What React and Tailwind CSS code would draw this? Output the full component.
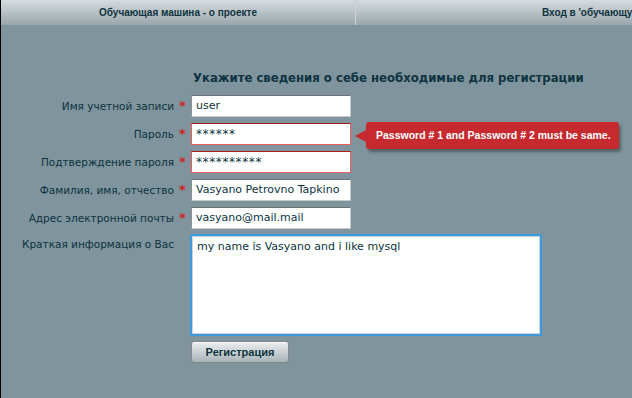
import React from "react";

const font = { fontFamily: '"DejaVu Sans", Verdana, sans-serif' };
const sansB = { fontFamily: '"Liberation Sans", Arial, sans-serif' };

function Label({ children, req }) {
  return (
    <>
      <div className="text-right text-[10.5px] leading-[22px] text-[#0d3340] whitespace-nowrap">{children}</div>
      <div className="text-center text-[13px] leading-[22px] text-[#d02020] font-bold">{req ? "*" : ""}</div>
    </>
  );
}

function Input({ value, error, children, big }) {
  return (
    <div className="relative">
      <div
        className={
          "w-[160px] h-[22px] bg-white border px-[4px] leading-[20px] text-[#0d3340] whitespace-nowrap overflow-hidden " +
          (big ? "text-[12px] tracking-[0.6px] " : "text-[11px] ") +
          (error
            ? "border-[#f05a5a] border-t-[#a81c1c]"
            : "border-[#c8c8c8] border-t-[#6a7276] border-l-[#8a9296]")
        }
      >
        {value}
      </div>
      {children}
    </div>
  );
}

export default function App() {
  return (
    <div style={font} className="w-[632px] h-[398px] bg-[#7f949d] border-l border-black overflow-hidden">
      <div style={sansB} className="flex h-[25px] bg-gradient-to-b from-[#d6dcdf] to-[#9aa6ac] text-[10px] font-bold text-[#0d3340] leading-[25px]">
        <div className="w-[354px] text-center">Обучающая машина - о проекте</div>
        <div className="w-px bg-[#c9d1d5]"></div>
        <div className="flex-1 pl-[186px] whitespace-nowrap overflow-hidden">Вход в 'обучающую машину'</div>
      </div>

      <div className="ml-[192px] mt-[45px] h-[16px] text-[11.7px] leading-[16px] font-bold text-[#0e3341] whitespace-nowrap">
        Укажите сведения о себе необходимые для регистрации
      </div>

      <div className="mt-[9px] grid grid-cols-[173px_17px_auto] gap-y-[6px]">
        <Label req>Имя учетной записи</Label>
        <Input value="user" />
        <Label req>Пароль</Label>
        <Input value="******" error big>
          <div className="absolute left-[164px] top-[-1px] flex items-center">
            <div className="w-0 h-0 border-y-[6px] border-y-transparent border-r-[11px] border-r-[#c62a2e]"></div>
            <div style={sansB} className="h-[27px] w-[253px] rounded-[3px] bg-[#c62a2e] shadow-[2px_3px_3px_rgba(0,0,0,0.35)] pl-[10px] text-[10.5px] leading-[26px] font-bold text-white whitespace-nowrap">
              Password # 1 and Password # 2 must be same.
            </div>
          </div>
        </Input>
        <Label req>Подтверждение пароля</Label>
        <Input value="**********" error big />
        <Label req>Фамилия, имя, отчество</Label>
        <Input value="Vasyano Petrovno Tapkino" />
        <Label req>Адрес электронной почты</Label>
        <Input value="vasyano@mail.mail" />
        <div className="text-right text-[10.5px] leading-[18px] text-[#0d3340] whitespace-nowrap">Краткая информация о Вас</div>
        <div></div>
        <div className="-ml-[1px] mt-[-1px]">
          <div className="w-[352px] h-[102px] border-2 border-[#3b9bdc] bg-white">
            <div className="h-full border border-[#d0d0d0] px-[4px] pt-[2px] text-[11px] leading-[16px] text-[#0d3340]">
              my name is Vasyano and i like mysql
            </div>
          </div>
          <button style={sansB} className="mt-[5px] ml-[1px] w-[98px] h-[22px] rounded-[3px] border border-[#7d878c] bg-gradient-to-b from-[#eceff0] to-[#a9b3b8] text-[11px] font-bold text-[#0d3340] leading-[20px] shadow-[inset_0_1px_0_rgba(255,255,255,0.7)]">
            Регистрация
          </button>
        </div>
      </div>
    </div>
  );
}
